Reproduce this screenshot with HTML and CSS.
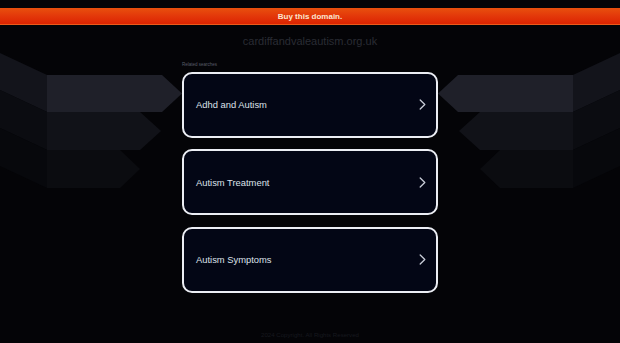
FILE: index.html
```html
<!DOCTYPE html>
<html lang="en">
<head>
<meta charset="utf-8">
<title>cardiffandvaleautism.org.uk</title>
<link rel="stylesheet" href="styles.css">
</head>
<body>
<svg class="deco" width="620" height="343" viewBox="0 0 620 343" aria-hidden="true">
  <g>
    <polygon points="0,53 47,75 47,112 0,90" fill="#13141b"/>
    <polygon points="47,75 162,75 182,93.5 162,112 47,112" fill="#1f2029"/>
    <polygon points="0,90 47,112 47,150 0,128" fill="#0b0c11"/>
    <polygon points="47,112 140,112 161,131 140,150 47,150" fill="#111218"/>
    <polygon points="0,128 47,150 47,188 0,166" fill="#07080c"/>
    <polygon points="47,150 120,150 140,169 120,188 47,188" fill="#0b0c10"/>
  </g>
  <g transform="translate(620,0) scale(-1,1)">
    <polygon points="0,53 47,75 47,112 0,90" fill="#13141b"/>
    <polygon points="47,75 162,75 182,93.5 162,112 47,112" fill="#1f2029"/>
    <polygon points="0,90 47,112 47,150 0,128" fill="#0b0c11"/>
    <polygon points="47,112 140,112 161,131 140,150 47,150" fill="#111218"/>
    <polygon points="0,128 47,150 47,188 0,166" fill="#07080c"/>
    <polygon points="47,150 120,150 140,169 120,188 47,188" fill="#0b0c10"/>
  </g>
</svg>
<div class="page">
  <a class="topbar" href="#">Buy this domain.</a>
  <div class="domain">cardiffandvaleautism.org.uk</div>
  <div class="main">
    <div class="label">Related searches</div>
    <div class="cards">
      <a class="card" href="#"><span>Adhd and Autism</span>
        <svg class="chev" width="7" height="11" viewBox="0 0 7 11"><polyline points="1.2,1 5.8,5.5 1.2,10" fill="none" stroke="#c9cdd8" stroke-width="1.3" stroke-linecap="round" stroke-linejoin="round"/></svg></a>
      <a class="card" href="#"><span>Autism Treatment</span>
        <svg class="chev" width="7" height="11" viewBox="0 0 7 11"><polyline points="1.2,1 5.8,5.5 1.2,10" fill="none" stroke="#c9cdd8" stroke-width="1.3" stroke-linecap="round" stroke-linejoin="round"/></svg></a>
      <a class="card" href="#"><span>Autism Symptoms</span>
        <svg class="chev" width="7" height="11" viewBox="0 0 7 11"><polyline points="1.2,1 5.8,5.5 1.2,10" fill="none" stroke="#c9cdd8" stroke-width="1.3" stroke-linecap="round" stroke-linejoin="round"/></svg></a>
    </div>
  </div>
  <div class="footer">2024 Copyright. All Rights Reserved</div>
</div>
</body>
</html>
```

FILE: styles.css
```css
html, body {
  margin: 0;
  padding: 0;
}
body {
  background: #040407;
  width: 620px;
  height: 343px;
  overflow: hidden;
  position: relative;
  font-family: "Liberation Sans", Arial, sans-serif;
}
.deco {
  position: absolute;
  left: 0;
  top: 0;
  z-index: 0;
}
.page {
  position: relative;
  z-index: 1;
  display: flex;
  flex-direction: column;
  align-items: center;
}
.topbar {
  margin-top: 8px;
  width: 100%;
  height: 17px;
  display: flex;
  align-items: center;
  justify-content: center;
  background: linear-gradient(to bottom, #e8500e 0%, #e3380a 50%, #dc2401 100%);
  border-bottom: 1px solid #ec5a1a;
  box-sizing: border-box;
  color: #fbe6cf;
  font-family: "Liberation Sans Narrow", "Liberation Sans", Arial, sans-serif;
  font-weight: bold;
  font-size: 8px;
  text-decoration: none;
}
.domain {
  margin-top: 8.5px;
  height: 14px;
  line-height: 14px;
  font-size: 11px;
  color: #2a2c34;
}
.main {
  width: 256px;
  display: flex;
  flex-direction: column;
}
.label {
  margin-top: 14.5px;
  height: 6px;
  line-height: 6px;
  font-size: 4.5px;
  color: #5a5e6a;
  margin-bottom: 3.5px;
}
.cards {
  display: flex;
  flex-direction: column;
  gap: 11.5px;
}
.card {
  box-sizing: border-box;
  height: 66px;
  border: 2px solid #eceef4;
  border-radius: 10px;
  background: #030615;
  display: flex;
  align-items: center;
  justify-content: space-between;
  padding: 0 10px 0 12px;
  color: #dde1ea;
  font-size: 9.4px;
  text-decoration: none;
}
.chev {
  display: block;
}
.footer {
  margin-top: 38.5px;
  height: 8px;
  line-height: 8px;
  font-size: 6.1px;
  color: #17191f;
}
```
